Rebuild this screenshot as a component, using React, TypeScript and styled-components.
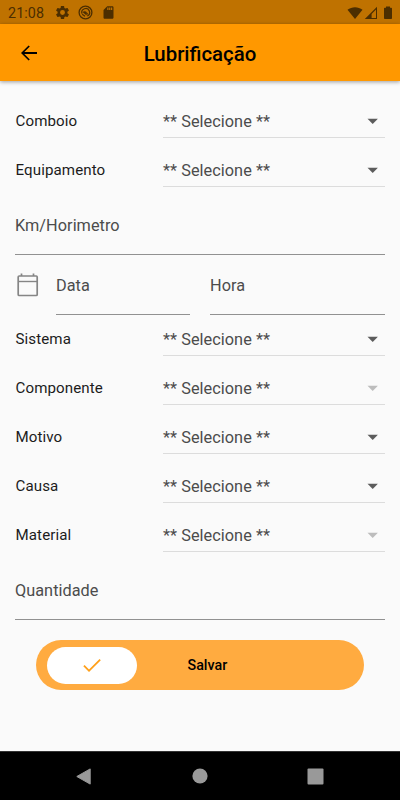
import React from 'react';
import styled, { createGlobalStyle } from 'styled-components';

const GlobalStyle = createGlobalStyle`
  * { box-sizing: border-box; }
  body { margin: 0; background: #fafafa; font-family: Roboto, sans-serif; }
`;

const Screen = styled.div`
  width: 400px;
  height: 800px;
  display: flex;
  flex-direction: column;
  background: #fafafa;
  overflow: hidden;
`;

const StatusBar = styled.div`
  height: 24px;
  flex: none;
  display: flex;
  align-items: center;
  padding: 1px 3px 0 8px;
  background: #bf7200;
  color: #4c2e00;
`;

const Clock = styled.span`
  width: 47px;
  font-size: 14.3px;
  letter-spacing: 0.1px;
`;

const StatusIcons = styled.div`
  display: flex;
  align-items: center;
  gap: 8px;
`;

const SignalIcons = styled(StatusIcons)`
  margin-left: auto;
  gap: 1px;
`;

const AppBar = styled.header`
  position: relative;
  height: 57px;
  flex: none;
  display: grid;
  grid-template-columns: 57px 1fr 57px;
  align-items: center;
  background: #ff9800;
  box-shadow: 0 1px 4px rgba(0, 0, 0, 0.38);
`;

const BackButton = styled.button`
  display: flex;
  justify-content: center;
  padding: 1px 0 0;
  border: 0;
  background: none;
  color: #000;
`;

const Title = styled.h1`
  margin: 0;
  padding-top: 2px;
  text-align: center;
  font-size: 20.4px;
  line-height: 24px;
  font-weight: 500;
`;

const Form = styled.main`
  flex: 1;
  padding: 16px 15px 0;
`;

const Row = styled.div`
  display: grid;
  grid-template-columns: 148px 1fr;
  height: 49px;
  align-items: start;
`;

const Label = styled.label`
  padding-left: 0.5px;
  font-size: 15.1px;
  line-height: 49px;
  color: #1c1c1c;
  letter-spacing: 0.1px;
`;

const Select = styled.div<{ $disabled?: boolean }>`
  display: flex;
  align-items: center;
  justify-content: space-between;
  height: 41px;
  padding: 8px 0 0;
  border-bottom: 1px solid #dcdcdc;
  font-size: 16.3px;
  letter-spacing: 0.04px;
  color: #4c4c4c;
  svg { color: ${(p) => (p.$disabled ? '#bdbdbd' : '#5c5c5c')}; }
`;

const Field = styled.div`
  height: 60px;
  border-bottom: 1px solid #919191;
  font-size: 16.3px;
  line-height: 61px;
  letter-spacing: 0.03px;
  color: #4c4c4c;
`;

const DateRow = styled.div`
  display: grid;
  grid-template-columns: 21px 134px 1fr;
  column-gap: 20px;
  align-items: center;
`;

const CalendarIcon = styled.svg`
  width: 25px;
  height: 25px;
  margin-top: -2px;
`;

const SaveTrack = styled.div`
  display: grid;
  grid-template-columns: 90px 1fr;
  align-items: center;
  height: 50px;
  margin: 20px 21px 0;
  padding: 0 11px;
  border-radius: 25px;
  background: #ffab40;
`;

const SaveThumb = styled.div`
  display: flex;
  align-items: center;
  justify-content: center;
  height: 37px;
  border-radius: 18.5px;
  background: #fff;
`;

const SaveText = styled.span`
  padding-left: 50.5px;
  font-size: 14.3px;
  font-weight: 500;
  color: #000;
`;

const NavBar = styled.nav`
  height: 49px;
  flex: none;
  display: flex;
  align-items: center;
  justify-content: space-between;
  padding: 0 76.5px 0 76px;
  border-top: 1px solid #333;
  background: #000;
`;

const HomeIcon = styled.svg`
  margin-left: 2px;
`;

function SelectRow({ label, disabled }: { label: string; disabled?: boolean }) {
  return (
    <Row>
      <Label>{label}</Label>
      <Select $disabled={disabled}>
        <span>** Selecione **</span>
        <svg width="24" height="24" viewBox="0 0 24 24" fill="currentColor">
          <path d="M6.5 9.8h10.4l-5.2 5.200z" />
        </svg>
      </Select>
    </Row>
  );
}

export default function App() {
  return (
    <Screen>
      <GlobalStyle />
      <StatusBar>
        <Clock>21:08</Clock>
        <StatusIcons>
          <svg width="15" height="15" viewBox="1 1 22 22" fill="currentColor">
            <path d="M19.14 12.94c.04-.3.06-.61.06-.94 0-.32-.02-.64-.07-.94l2.03-1.58a.49.49 0 0 0 .12-.61l-1.92-3.32a.49.49 0 0 0-.59-.22l-2.39.96c-.5-.38-1.03-.7-1.62-.94l-.36-2.54a.48.48 0 0 0-.48-.41h-3.84c-.24 0-.43.17-.47.41l-.36 2.54c-.59.24-1.13.57-1.62.94l-2.39-.96a.48.48 0 0 0-.59.22L2.74 8.87c-.12.21-.08.47.12.61l2.03 1.58c-.05.3-.09.63-.09.94s.02.64.07.94l-2.03 1.58a.49.49 0 0 0-.12.61l1.92 3.32c.12.22.37.29.59.22l2.39-.96c.5.38 1.03.7 1.62.94l.36 2.54c.05.24.24.41.48.41h3.84c.24 0 .44-.17.47-.41l.36-2.54c.59-.24 1.13-.56 1.62-.94l2.39.96c.22.08.47 0 .59-.22l1.92-3.32a.49.49 0 0 0-.12-.61zM12 15.6a3.6 3.6 0 1 1 0-7.2 3.6 3.6 0 0 1 0 7.2z" />
          </svg>
          <svg width="15" height="15" viewBox="0 0 15 15" fill="none" stroke="currentColor">
            <circle cx="7.5" cy="7.5" r="6.4" strokeWidth="1.3" />
            <path d="M4 8.6a3.9 3.9 0 1 1 5.3 2.4" strokeWidth="1.3" />
            <path d="M5 7.2C6.5 5.6 8.5 6.5 10 9.3L8 8.6 8.5 10z" fill="currentColor" strokeWidth=".6" />
            <path d="M4.2 9.3 7 11.2" strokeWidth="1.2" />
          </svg>
          <svg width="15" height="15" viewBox="0 0 24 24" fill="currentColor">
            <path d="M18 2h-8L4.02 8 4 20c0 1.1.9 2 2 2h12c1.1 0 2-.9 2-2V4c0-1.1-.9-2-2-2zm-6 6h-2V4h2zm3 0h-2V4h2zm3 0h-2V4h2z" />
          </svg>
        </StatusIcons>
        <SignalIcons>
          <svg width="16" height="14" viewBox="0 0 16 14" fill="currentColor">
            <path d="M.5 3.8C4.8.3 11.2.3 15.5 3.8L8 13z" />
          </svg>
          <svg width="14" height="14" viewBox="0 0 14 14" fill="currentColor">
            <path fillRule="evenodd" d="M13 .8V13H.8zM12 3.5 7.6 7.9V12H12z" />
          </svg>
          <svg width="18" height="14" viewBox="1 0 18 14" fill="currentColor">
            <path d="M8 .5h4v1.3h1.2q.8 0 .8.8v9.6q0 .8-.8.8H6.8q-.8 0-.8-.8V2.6q0-.8.8-.8H8z" />
          </svg>
        </SignalIcons>
      </StatusBar>

      <AppBar>
        <BackButton aria-label="Voltar">
          <svg width="24" height="24" viewBox="0 0 24 24" fill="currentColor">
            <path d="M20 11.1H7.3l5.5-5.5L11.6 4.4 4 12l7.6 7.6 1.2-1.2-5.5-5.5H20z" />
          </svg>
        </BackButton>
        <Title>Lubrificação</Title>
      </AppBar>

      <Form>
        <SelectRow label="Comboio" />
        <SelectRow label="Equipamento" />
        <Field>Km/Horimetro</Field>
        <DateRow>
          <CalendarIcon viewBox="0 0 25 25" fill="none" stroke="#858585">
            <rect x="3.2" y="4" width="19" height="19.5" rx="1" strokeWidth="1.7" />
            <path d="M3 9.5h19.5" strokeWidth="1.4" />
            <path d="M6.5 1.5V4M18.5 1.5V4" strokeWidth="1.7" />
          </CalendarIcon>
          <Field>Data</Field>
          <Field>Hora</Field>
        </DateRow>
        <SelectRow label="Sistema" />
        <SelectRow label="Componente" disabled />
        <SelectRow label="Motivo" />
        <SelectRow label="Causa" />
        <SelectRow label="Material" disabled />
        <Field>Quantidade</Field>
        <SaveTrack>
          <SaveThumb>
            <svg width="24" height="24" viewBox="0 0 24 24" fill="#ffa01a">
              <path d="M9 16.4 4.6 12l-1.3 1.3L9 19 20.8 7.2l-1.3-1.3z" />
            </svg>
          </SaveThumb>
          <SaveText>Salvar</SaveText>
        </SaveTrack>
      </Form>

      <NavBar>
        <svg width="15" height="17" viewBox="0 0 15 17"><path d="M.8 8.5 14.2.9v15.2z" fill="#999" stroke="#999" strokeLinejoin="round" /></svg>
        <HomeIcon width="16" height="16" viewBox="0 0 16 16"><circle cx="8" cy="8" r="7.6" fill="#999" /></HomeIcon>
        <svg width="17" height="17" viewBox="0 0 17 17"><rect x=".5" y=".5" width="16" height="16" rx="1" fill="#999" /></svg>
      </NavBar>
    </Screen>
  );
}
